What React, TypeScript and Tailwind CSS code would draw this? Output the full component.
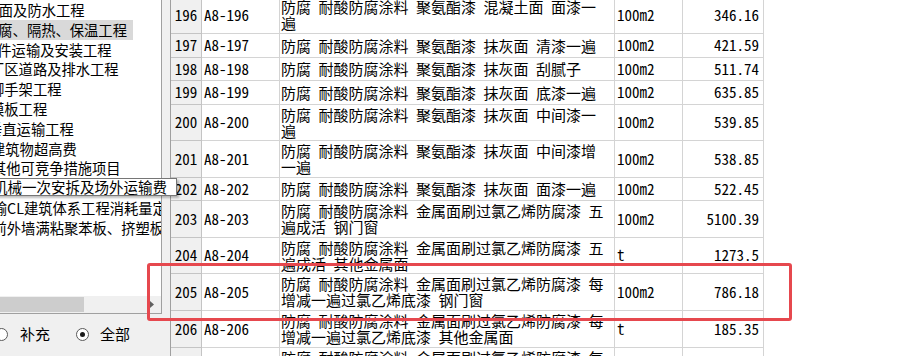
import React from 'react';

type Row = { n: string; c: string; d: string[]; u: string; p: string; h: string };

const rows: Row[] = [
  { n: '196', c: 'A8-196', d: ['防腐 耐酸防腐涂料 聚氨酯漆 混凝土面 面漆一', '遍'], u: '100m2', p: '346.16', h: 'h-[37px]' },
  { n: '197', c: 'A8-197', d: ['防腐 耐酸防腐涂料 聚氨酯漆 抹灰面 清漆一遍'], u: '100m2', p: '421.59', h: 'h-[24px]' },
  { n: '198', c: 'A8-198', d: ['防腐 耐酸防腐涂料 聚氨酯漆 抹灰面 刮腻子'], u: '100m2', p: '511.74', h: 'h-[23px]' },
  { n: '199', c: 'A8-199', d: ['防腐 耐酸防腐涂料 聚氨酯漆 抹灰面 底漆一遍'], u: '100m2', p: '635.85', h: 'h-[24px]' },
  { n: '200', c: 'A8-200', d: ['防腐 耐酸防腐涂料 聚氨酯漆 抹灰面 中间漆一', '遍'], u: '100m2', p: '539.85', h: 'h-[36px]' },
  { n: '201', c: 'A8-201', d: ['防腐 耐酸防腐涂料 聚氨酯漆 抹灰面 中间漆增', '一遍'], u: '100m2', p: '538.85', h: 'h-[37px]' },
  { n: '202', c: 'A8-202', d: ['防腐 耐酸防腐涂料 聚氨酯漆 抹灰面 面漆一遍'], u: '100m2', p: '522.45', h: 'h-[23px]' },
  { n: '203', c: 'A8-203', d: ['防腐 耐酸防腐涂料 金属面刷过氯乙烯防腐漆 五', '遍成活 钢门窗'], u: '100m2', p: '5100.39', h: 'h-[37px]' },
  { n: '204', c: 'A8-204', d: ['防腐 耐酸防腐涂料 金属面刷过氯乙烯防腐漆 五', '遍成活 其他金属面'], u: 't', p: '1273.5', h: 'h-[36px]' },
  { n: '205', c: 'A8-205', d: ['防腐 耐酸防腐涂料 金属面刷过氯乙烯防腐漆 每', '增减一遍过氯乙烯底漆 钢门窗'], u: '100m2', p: '786.18', h: 'h-[37px]' },
  { n: '206', c: 'A8-206', d: ['防腐 耐酸防腐涂料 金属面刷过氯乙烯防腐漆 每', '增减一遍过氯乙烯底漆 其他金属面'], u: 't', p: '185.35', h: 'h-[37px]' },
  { n: '207', c: 'A8-207', d: ['防腐 耐酸防腐涂料 金属面刷过氯乙烯防腐漆 每', '增减一遍过氯乙烯面漆 钢门窗'], u: '100m2', p: '260.54', h: 'h-[37px]' },
];

type TreeItem = { t: string; ml: string; sel?: boolean };

const tree: TreeItem[] = [
  { t: '屋面及防水工程', ml: 'ml-[-15.5px]' },
  { t: '防腐、隔热、保温工程', ml: 'ml-[-16px]', sel: true },
  { t: '构件运输及安装工程', ml: 'ml-[-17px]' },
  { t: '厂区道路及排水工程', ml: 'ml-[-10px]' },
  { t: '脚手架工程', ml: 'ml-[-10px]' },
  { t: '模板工程', ml: 'ml-[-10px]' },
  { t: '垂直运输工程', ml: 'ml-[-12px]' },
  { t: '建筑物超高费', ml: 'ml-[-9px]' },
  { t: '其他可竞争措施项目', ml: 'ml-[-8px]' },
  { t: '大型机械一次安拆及场外运输费', ml: 'ml-[-36px]' },
  { t: '输CL建筑体系工程消耗量定额', ml: 'ml-[-7.25px]' },
  { t: '前外墙满粘聚苯板、挤塑板保温', ml: 'ml-[-7.5px]' },
];

function Radio({ checked }: { checked: boolean }) {
  return (
    <span className="w-[13px] h-[13px] rounded-full border border-[#5a5a5a] bg-white flex items-center justify-center shrink-0">
      {checked && <span className="w-[5px] h-[5px] rounded-full bg-[#1a1a1a]" />}
    </span>
  );
}

export default function App() {
  return (
    <div className="relative w-[919px] h-[356px] overflow-hidden bg-white flex text-black">
      {/* left panel */}
      <div className="w-[162px] shrink-0 flex flex-col">
        <div className="h-[314px] border-r border-b border-[#a0a0a0] bg-white flex flex-col overflow-hidden">
          <div className="flex-1 overflow-hidden font-['Noto_Sans_CJK_SC',sans-serif] text-[14.3px]">
            {tree.map((it, i) => (
              <div key={i} className="h-[19.8px] leading-[19.8px] whitespace-nowrap flex">
                <span className={`${it.ml} ${it.sel ? 'bg-[#d9d9d9] pr-[6px]' : ''}`}>{it.t}</span>
              </div>
            ))}
          </div>
          <div className="h-[17px] bg-[#f0f0f0] flex items-center">
            <div className="w-[84px] h-[15px] bg-[#cdcdcd]" />
            <div className="flex-1" />
            <svg width="4" height="7" viewBox="0 0 4 7" className="mr-[7px]">
              <path d="M0 0 L4 3.5 L0 7 Z" fill="#606060" />
            </svg>
          </div>
        </div>
        <div className="flex-1 bg-[#f0f0f0] flex items-center pb-[2px] font-['Noto_Sans_CJK_SC',sans-serif] text-[15px]">
          <div className="ml-[-5px] flex items-center">
            <Radio checked={false} />
            <span className="ml-[12px]">补充</span>
          </div>
          <div className="ml-[26px] flex items-center">
            <Radio checked={true} />
            <span className="ml-[11px]">全部</span>
          </div>
        </div>
      </div>
      {/* splitter */}
      <div className="w-[9px] shrink-0 bg-[#f0f0f0] border-r border-[#a0a0a0]" />
      {/* table */}
      <div className="flex-1 overflow-hidden bg-white font-['Noto_Sans_Mono_CJK_SC','Noto_Sans_CJK_SC',monospace] text-[15px]">
        <div className="mt-[-3px]">
          {rows.map((r) => (
            <div key={r.n} className={`flex ${r.h}`}>
              <div className="w-[31px] shrink-0 bg-[#f0f0f0] border-r border-b border-[#c4c4c4] flex items-center justify-center">
                {r.n}
              </div>
              <div className="w-[78px] shrink-0 border-r border-b border-[#d4d4d4] flex items-center pl-[2px] whitespace-nowrap">
                {r.c}
              </div>
              <div className="w-[335px] shrink-0 border-r border-b border-[#d4d4d4] flex flex-col justify-center pl-[1px] leading-[16px] whitespace-nowrap overflow-visible">
                {r.d.map((l, i) => (
                  <div key={i}>{l}</div>
                ))}
              </div>
              <div className="w-[68px] shrink-0 border-r border-b border-[#d4d4d4] flex items-center pl-[2px]">
                {r.u}
              </div>
              <div className="w-[81px] shrink-0 border-r border-b border-[#d4d4d4] flex items-center justify-end pr-[4px]">
                {r.p}
              </div>
            </div>
          ))}
        </div>
      </div>
      {/* tooltip */}
      <div className="absolute top-[178px] right-[742px] h-[18px] border border-[#767676] bg-white shadow-[2px_2px_2px_rgba(0,0,0,0.25)] pr-[9px] pl-[3px] whitespace-nowrap font-['Noto_Sans_CJK_SC',sans-serif] text-[14.5px] leading-[16px]">
        大型机械一次安拆及场外运输费
      </div>
      {/* red highlight */}
      <div className="absolute left-[147px] top-[263px] w-[645px] h-[58px] border-[3px] border-[#e6484e] rounded-[3px]" />
    </div>
  );
}
